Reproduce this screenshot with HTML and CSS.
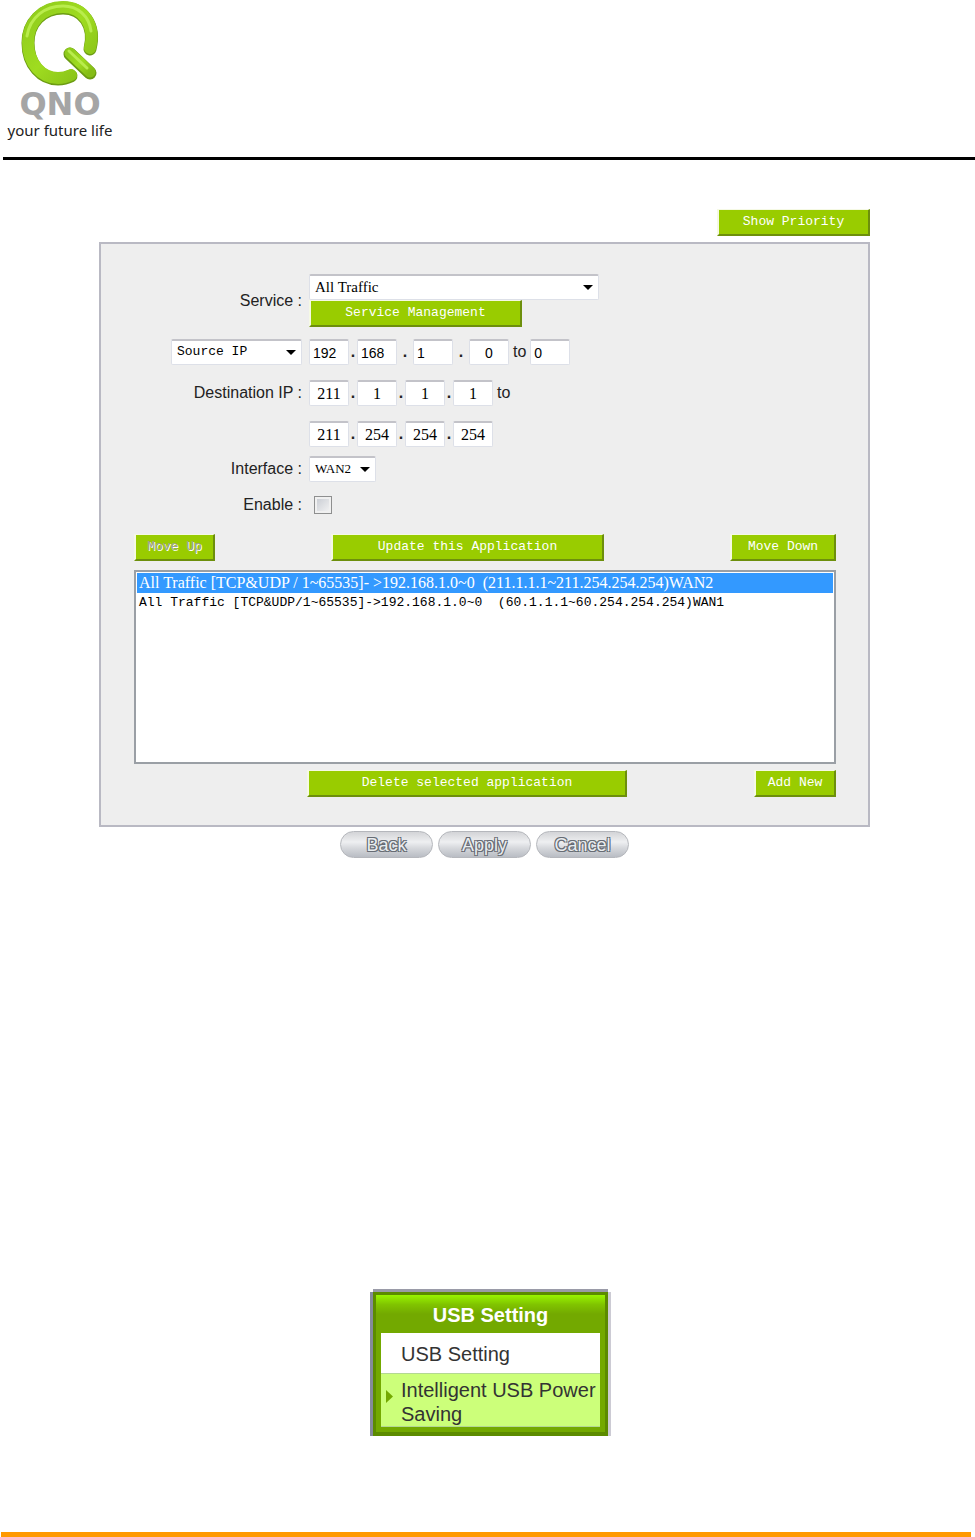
FILE: index.html
```
<!DOCTYPE html>
<html lang="en">
<head>
  <meta charset="UTF-8">
  <meta name="viewport" content="width=device-width, initial-scale=1.0">
  <title>QNO - Application Binding</title>
  <link rel="stylesheet" href="styles.css">
</head>
<body>
  <!-- Header -->
  <header class="header">
    <div class="logo">
      <svg class="logo-mark" viewBox="0 0 84 88" width="84" height="88" xmlns="http://www.w3.org/2000/svg">
        <defs>
          <linearGradient id="ring" x1="0" y1="0" x2="1" y2="1">
            <stop offset="0" stop-color="#8fcb1c"></stop>
            <stop offset="0.5" stop-color="#9fdc20"></stop>
            <stop offset="1" stop-color="#85bd16"></stop>
          </linearGradient>
        </defs>
        <g fill="none" stroke-linecap="round">
          <path d="M71 49 C77 25 64 8 44 8 C23 8 9 23 9 43 C9 65 23 79 39 79 Q46 79 52 76" stroke="#6b9b12" stroke-width="13"></path>
          <path d="M71 48 C77 25 64 7 44 7 C23 7 9 23 9 42 C9 64 23 78 39 78 Q46 78 52 75" stroke="url(#ring)" stroke-width="12"></path>
          <path d="M8 36 C11 17 26 6 44 6 C59 6 70 16 72 31" stroke="#b9ec4c" stroke-width="3"></path>
          <path d="M51 54 L71 73" stroke="#ffffff" stroke-width="17"></path>
          <path d="M51 54 L71 73" stroke="#6b9b12" stroke-width="13"></path>
          <path d="M51 53 L71 72" stroke="url(#ring)" stroke-width="11"></path>
          <path d="M50 51 L68 68" stroke="#b9ec4c" stroke-width="3"></path>
        </g>
      </svg>
      <div class="logo-name">QNO</div>
      <div class="logo-slogan">your future life</div>
    </div>
  </header>

  <!-- Main Content -->
  <main class="main-content">
    <form>
      <div class="top-bar">
        <button type="button" class="btn btn-priority">Show Priority</button>
      </div>

      <div class="panel">
        <div class="row">
          <label class="label" for="service">Service :</label>
          <div class="service-controls">
            <div class="select-box select-service">
              <select id="service"><option>All Traffic</option></select>
            </div>
            <button type="button" class="btn btn-service">Service Management</button>
          </div>
        </div>

        <div class="row row-source">
          <div class="label">
            <div class="select-box select-source">
              <select aria-label="Source type"><option>Source IP</option></select>
            </div>
          </div>
          <div class="octets octets-source">
            <input type="text" value="192" aria-label="Source IP part 1">
            <span class="dot">.</span>
            <input type="text" value="168" aria-label="Source IP part 2">
            <span class="dot dot-wide">.</span>
            <input type="text" value="1" aria-label="Source IP part 3">
            <span class="dot dot-wide">.</span>
            <input type="text" class="centered" value="0" aria-label="Source IP part 4">
            <span class="to">to</span>
            <input type="text" value="0" aria-label="Source IP range end">
          </div>
        </div>

        <div class="row row-destination">
          <label class="label" for="dest">Destination IP :</label>
          <div class="octets">
            <input type="text" id="dest" value="211">
            <span class="dot">.</span>
            <input type="text" value="1" aria-label="Destination IP part 2">
            <span class="dot">.</span>
            <input type="text" value="1" aria-label="Destination IP part 3">
            <span class="dot">.</span>
            <input type="text" value="1" aria-label="Destination IP part 4">
            <span class="to">to</span>
          </div>
        </div>

        <div class="row row-destination">
          <div class="label"></div>
          <div class="octets">
            <input type="text" value="211" aria-label="Destination end part 1">
            <span class="dot">.</span>
            <input type="text" value="254" aria-label="Destination end part 2">
            <span class="dot">.</span>
            <input type="text" value="254" aria-label="Destination end part 3">
            <span class="dot">.</span>
            <input type="text" value="254" aria-label="Destination end part 4">
          </div>
        </div>

        <div class="row row-interface">
          <label class="label" for="interface">Interface :</label>
          <div class="select-box select-interface">
            <select id="interface"><option>WAN2</option></select>
          </div>
        </div>

        <div class="row row-enable">
          <label class="label" for="enable">Enable :</label>
          <input type="checkbox" id="enable" class="checkbox">
        </div>

        <div class="actions">
          <button type="button" class="btn btn-up" disabled>Move Up</button>
          <button type="button" class="btn btn-update">Update this Application</button>
          <button type="button" class="btn btn-down">Move Down</button>
        </div>

        <select class="rules" size="9" aria-label="Applications">
          <option class="rule-serif" selected>All Traffic [TCP&amp;UDP / 1~65535]- &gt;192.168.1.0~0&nbsp; (211.1.1.1~211.254.254.254)WAN2</option>
          <option>All Traffic [TCP&amp;UDP/1~65535]-&gt;192.168.1.0~0&nbsp; (60.1.1.1~60.254.254.254)WAN1</option>
        </select>

        <div class="actions actions-bottom">
          <button type="button" class="btn btn-delete">Delete selected application</button>
          <button type="button" class="btn btn-add">Add New</button>
        </div>
      </div>

      <div class="submit-bar">
        <button type="button" class="pill">Back</button>
        <button type="submit" class="pill">Apply</button>
        <button type="reset" class="pill">Cancel</button>
      </div>
    </form>

    <!-- USB menu -->
    <nav class="usb-menu">
      <div class="usb-inner">
        <h2 class="usb-title">USB Setting</h2>
        <div class="usb-items">
          <a href="#" class="usb-item">USB Setting</a>
          <a href="#" class="usb-item active">
            <svg class="usb-arrow" viewBox="0 0 7 13" width="7" height="13" xmlns="http://www.w3.org/2000/svg"><polygon points="0 0 7 6.5 0 13" fill="#73a900"></polygon></svg>
            <span>Intelligent USB Power Saving</span>
          </a>
        </div>
      </div>
    </nav>
  </main>

  <footer class="footer"></footer>
</body>
</html>
```

FILE: styles.css
```
* {
  margin: 0;
  padding: 0;
  box-sizing: border-box;
}

body {
  background-color: #ffffff;
  color: #222222;
  font-family: "Liberation Sans", Arial, sans-serif;
  font-size: 16px;
  min-height: 100vh;
  display: flex;
  flex-direction: column;
}

/* Header */
.header {
  margin-left: 3px;
  padding-left: 3px;
  height: 160px;
  border-bottom: 3px solid #000000;
}

.logo {
  width: 108px;
  display: flex;
  flex-direction: column;
  align-items: center;
}

.logo-mark {
  margin-left: 2px;
}

.logo-name {
  font-family: "DejaVu Sans", sans-serif;
  font-weight: bold;
  font-size: 32px;
  line-height: 32px;
  color: #a5a5a5;
}

.logo-slogan {
  font-family: "Noto Sans", sans-serif;
  font-size: 15px;
  line-height: 20px;
  color: #222222;
  white-space: nowrap;
}

/* Form */
.main-content {
  padding: 49px 105px 0 99px;
}

.top-bar {
  display: flex;
  justify-content: flex-end;
  margin-bottom: 6px;
}

.panel {
  background-color: #eeeeee;
  border: 2px solid #b9b9c3;
  padding: 30px 32px 28px 33px;
}

.row {
  display: grid;
  grid-template-columns: 168px 1fr;
  column-gap: 7px;
  align-items: center;
}

.row-source {
  margin-top: 12px;
}

.row-destination {
  margin-top: 15px;
}

.row-interface {
  margin-top: 9px;
}

.row-enable {
  margin-top: 14px;
}

.label {
  display: flex;
  justify-content: flex-end;
}

.service-controls {
  display: flex;
  flex-direction: column;
  align-items: flex-start;
}

.select-box {
  display: grid;
  grid-template-columns: 1fr 16px;
  align-items: center;
}

.select-box select {
  grid-area: 1 / 1 / 2 / 3;
  width: 100%;
  height: 26px;
  padding: 0 6px 2px 5px;
  appearance: none;
  background-color: #ffffff;
  border: 1px solid #dde0e8;
  border-top: 2px solid #c3c3c9;
  border-radius: 2px;
  color: #000000;
  font-family: "Liberation Mono", monospace;
  font-size: 13px;
}

.select-box::after {
  content: "";
  grid-area: 1 / 2;
  justify-self: start;
  width: 0;
  border: 5px solid transparent;
  border-top-color: #000000;
  border-bottom: 0;
  pointer-events: none;
  z-index: 1;
}

.select-service {
  width: 290px;
}

.select-box.select-service select {
  font-family: "Liberation Serif", serif;
  font-size: 15px;
}

.select-source {
  width: 131px;
}

.select-interface {
  width: 67px;
}

.select-box.select-interface select {
  font-family: "Liberation Serif", serif;
  font-size: 13px;
}

.octets {
  display: flex;
}

.octets input {
  width: 40px;
  height: 26px;
  background-color: #ffffff;
  border: 1px solid #dde0e8;
  border-top: 2px solid #c3c3c9;
  border-radius: 2px;
  color: #000000;
  font-family: "Liberation Serif", serif;
  font-size: 16px;
  text-align: center;
}

.octets-source input {
  padding-left: 3px;
  font-family: "Liberation Sans", sans-serif;
  font-size: 14px;
  text-align: left;
}

.octets-source .centered {
  padding-left: 0;
  text-align: center;
}

.dot {
  width: 8px;
  line-height: 26px;
  font-weight: bold;
  text-align: center;
}

.dot-wide {
  width: 16px;
}

.to {
  padding: 0 4px;
  line-height: 26px;
}

.checkbox {
  appearance: none;
  width: 18px;
  height: 18px;
  margin-left: 5px;
  border: 1px solid #8e8f8f;
  background: linear-gradient(135deg, #c5c9d0, #f6f6f6);
  box-shadow: inset 0 0 0 2px #f0f0f0;
}

.btn {
  height: 27px;
  padding-bottom: 2px;
  background-color: #99cc00;
  border: 2px solid #f5f9e4;
  border-right-color: #6d8f0c;
  border-bottom-color: #6d8f0c;
  border-top-width: 1px;
  color: #ffffff;
  font-family: "Liberation Mono", monospace;
  font-size: 13px;
  white-space: nowrap;
}

.btn:disabled {
  color: #a0a090;
  text-shadow: 1px 1px 0 #ffffff;
}

.btn-priority {
  width: 153px;
}

.btn-service {
  width: 213px;
}

.actions {
  display: flex;
  margin-top: 20px;
}

.btn-up {
  width: 81px;
}

.btn-update {
  width: 273px;
  margin-left: 116px;
}

.btn-down {
  width: 106px;
  margin-left: auto;
}

.rules {
  display: block;
  width: 100%;
  height: 194px;
  margin-top: 9px;
  padding: 1px;
  background-color: #ffffff;
  border: 2px solid #9a9fa5;
  border-radius: 0;
  outline: 0;
  overflow: hidden;
  font-family: "Liberation Mono", monospace;
  font-size: 13px;
  color: #000000;
}

.rules option {
  height: 20px;
  padding: 2px 2px 0;
  color: #000000;
}

.rules .rule-serif {
  padding-top: 1px;
  font-family: "Liberation Serif", serif;
  font-size: 16px;
}

.rules option:checked {
  background: #3399ff linear-gradient(#3399ff, #3399ff);
  color: #ffffff;
  -webkit-text-fill-color: #ffffff;
}

.actions-bottom {
  margin-top: 6px;
}

.btn-delete {
  width: 320px;
  margin-left: 173px;
}

.btn-add {
  width: 82px;
  margin-left: auto;
}

.submit-bar {
  display: flex;
  justify-content: center;
  gap: 5px;
  margin-top: 4px;
}

.pill {
  width: 93px;
  height: 27px;
  border: 1px solid #b5b7bc;
  border-radius: 14px;
  background: linear-gradient(#d3d4d7, #eeeff1 40%, #d5d7db 65%, #b9bdc4);
  color: #e9edf0;
  font-family: "Liberation Sans", Arial, sans-serif;
  font-size: 18px;
  line-height: 24px;
  text-shadow: -1px -1px 0 #666b73, 1px -1px 0 #666b73, -1px 1px 0 #666b73, 1px 1px 0 #666b73;
}

/* USB menu */
.usb-menu {
  width: 253px;
  margin: 431px auto 0;
  padding: 3px 3px 0 15px;
}

.usb-inner {
  background-color: #73a900;
  border: 3px solid #5c8b00;
  border-bottom-width: 4px;
  box-shadow: -3px 0 0 #858a9a, 3px 0 0 #cccbd4, 0 -3px 0 #9a9ba8;
}

.usb-title {
  height: 38px;
  background: linear-gradient(#99f500, #80c400 25%, #73a900 50%);
  color: #ffffff;
  font-size: 20px;
  line-height: 40px;
  text-align: center;
}

.usb-items {
  padding: 0 5px 5px;
}

.usb-item {
  display: flex;
  align-items: center;
  min-height: 40px;
  padding: 2px 0 0 20px;
  background-color: #ffffff;
  color: #333333;
  font-size: 20px;
  line-height: 24px;
  text-decoration: none;
}

.usb-item.active {
  gap: 8px;
  min-height: 54px;
  padding: 4px 0 0 5px;
  background-color: #ccff7a;
  border-top: 1px solid #b4d893;
  border-bottom: 1px solid #b4d893;
}

.usb-arrow {
  flex-shrink: 0;
  margin-bottom: 12px;
}

/* Footer */
.footer {
  height: 5px;
  margin: auto 4px 0 1px;
  background-color: #ff9900;
}
```
